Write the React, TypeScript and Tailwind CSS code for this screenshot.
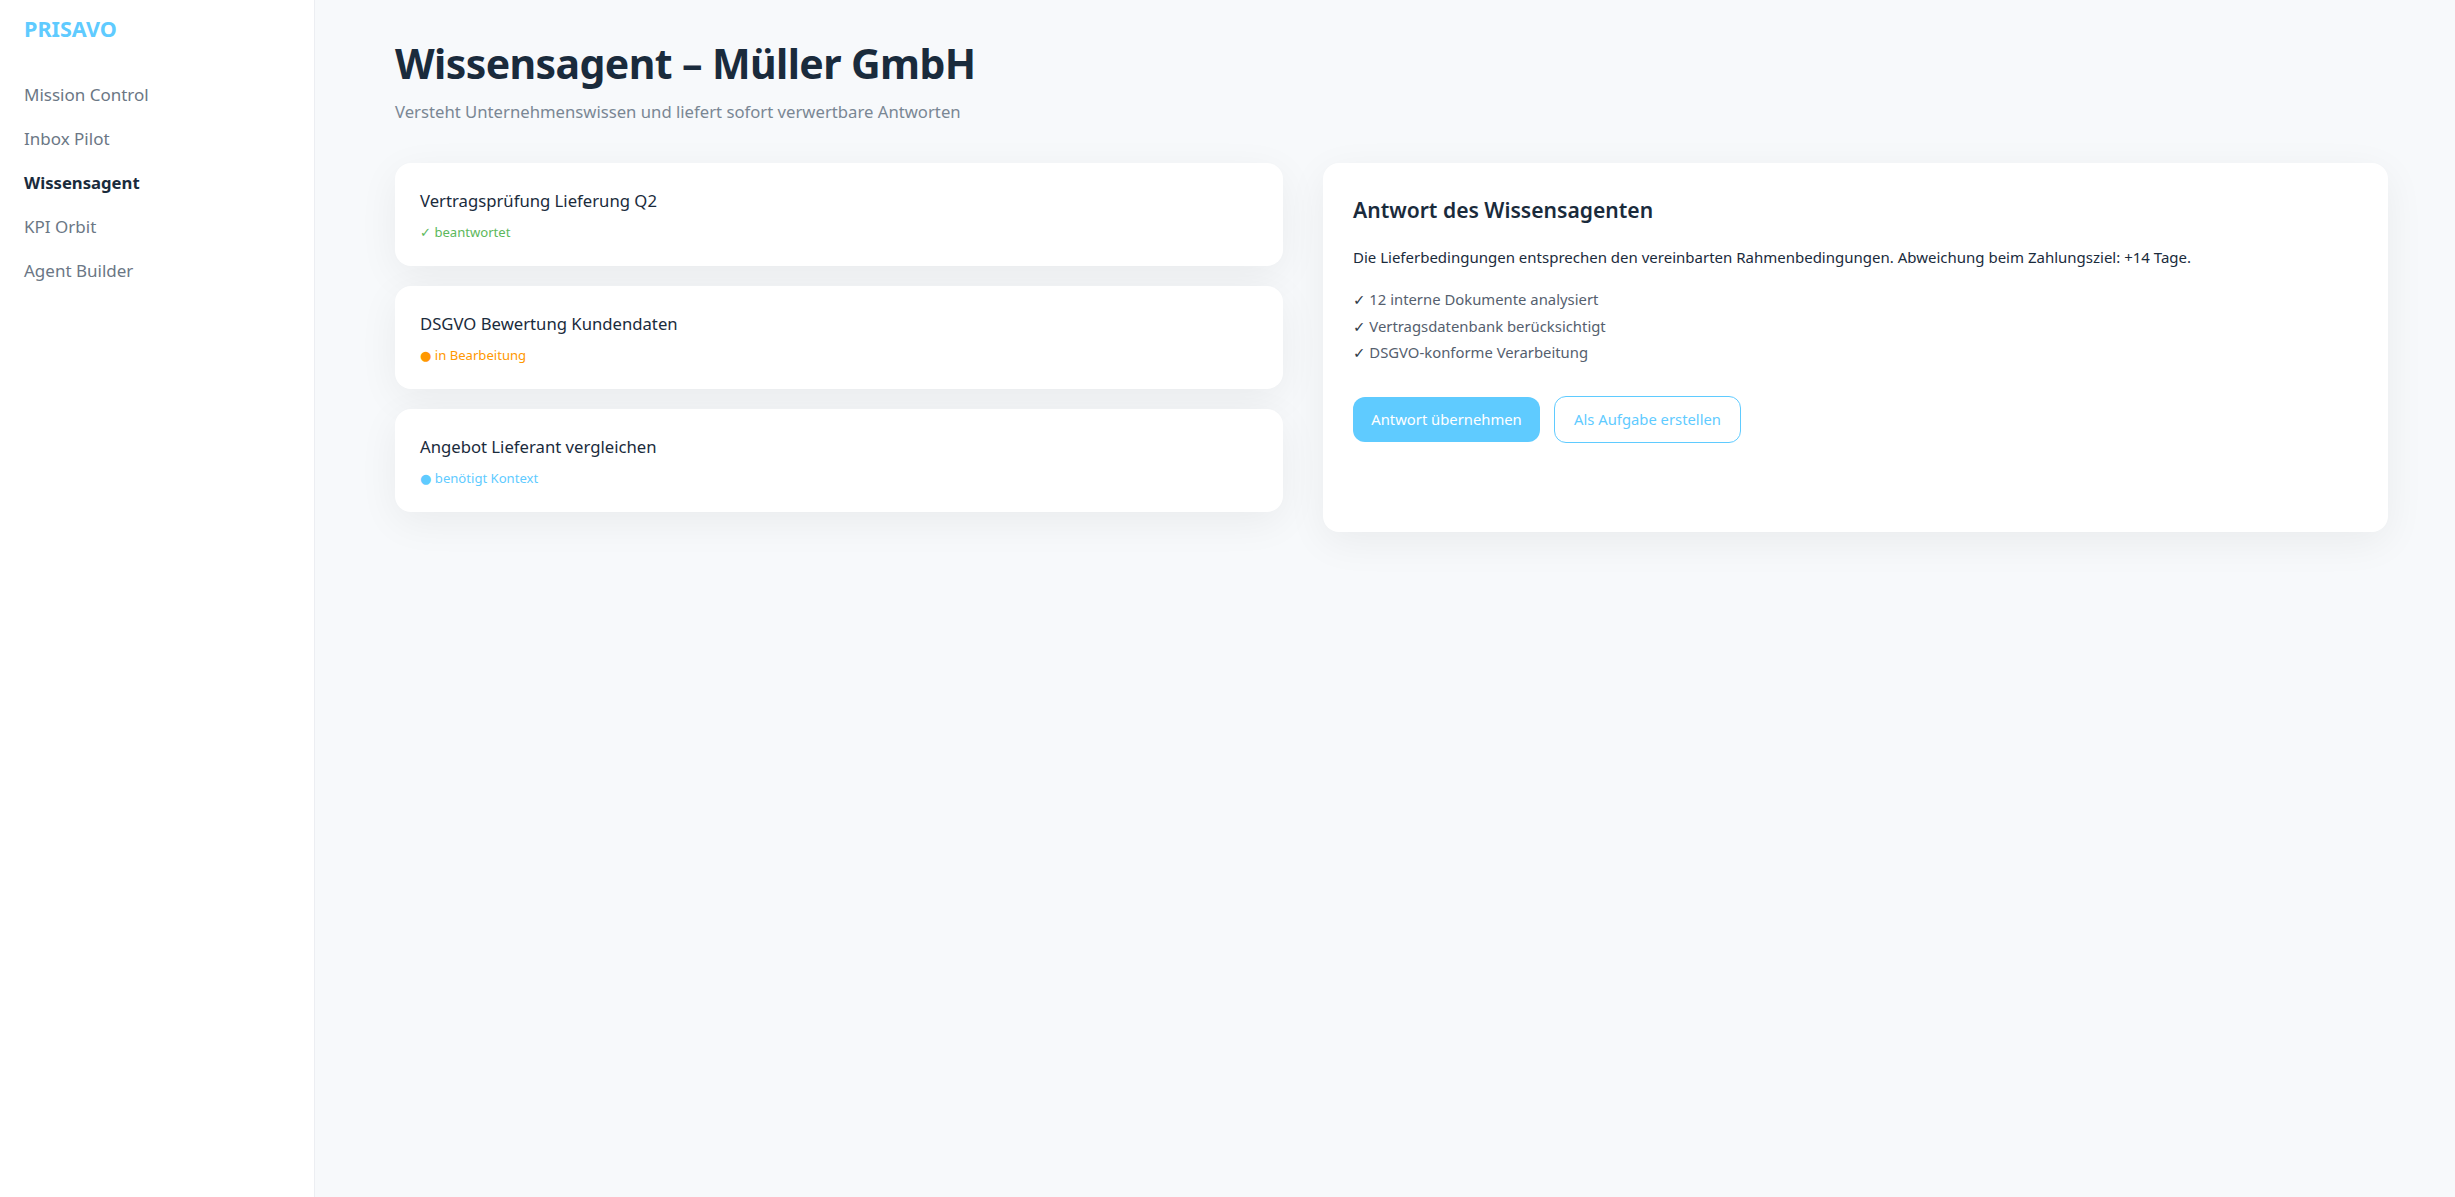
const navItems = [
  { label: "Mission Control", active: false },
  { label: "Inbox Pilot", active: false },
  { label: "Wissensagent", active: true },
  { label: "KPI Orbit", active: false },
  { label: "Agent Builder", active: false },
];

const requests = [
  { title: "Vertragsprüfung Lieferung Q2", mark: "✓", status: "beantwortet", color: "text-[#5cb85c]" },
  { title: "DSGVO Bewertung Kundendaten", mark: "●", status: "in Bearbeitung", color: "text-[#ff9800]" },
  { title: "Angebot Lieferant vergleichen", mark: "●", status: "benötigt Kontext", color: "text-[#5fcbff]" },
];

const checks = [
  "12 interne Dokumente analysiert",
  "Vertragsdatenbank berücksichtigt",
  "DSGVO-konforme Verarbeitung",
];

const App = () => {
  return (
    <div className="flex min-h-[1197px] bg-[#f7f9fb] font-['Noto_Sans','Open_Sans',sans-serif] text-[#1a2b3c]">
      <aside className="w-[315px] shrink-0 border-r border-[#eceef2] bg-white px-6 pt-[15px]">
        <div className="text-[21.6px] leading-[28px] font-bold text-[#5fcbff]">PRISAVO</div>
        <nav className="mt-[30px] flex flex-col">
          {navItems.map((item) => (
            <div
              key={item.label}
              className={
                item.active
                  ? "h-11 text-[16.7px] leading-11 font-bold text-[#1a2b3c]"
                  : "h-11 text-[17px] leading-11 text-[#6b7785]"
              }
            >
              {item.label}
            </div>
          ))}
        </nav>
      </aside>

      <main className="flex-1 pt-[35px] pr-[67px] pl-[80px]">
        <h1 className="text-[41px] leading-[56px] font-bold tracking-[-0.6px]">Wissensagent – Müller GmbH</h1>
        <p className="mt-[8px] text-[16.7px] leading-[26px] text-[#7a8794]">
          Versteht Unternehmenswissen und liefert sofort verwertbare Antworten
        </p>

        <div className="mt-[38px] grid grid-cols-[888px_1fr] gap-10">
          <div className="flex flex-col gap-5">
            {requests.map((request) => (
              <div
                key={request.title}
                className="h-[103px] rounded-2xl bg-white px-[25px] pt-[24px] shadow-[0_10px_40px_rgba(0,0,0,0.06)]"
              >
                <div className="text-[16.7px] leading-[28px]">{request.title}</div>
                <div className={`mt-[7px] text-[13.1px] leading-[20px] ${request.color}`}>
                  <span className="font-['DejaVu_Sans']">{request.mark}</span> {request.status}
                </div>
              </div>
            ))}
          </div>

          <section className="h-[369px] rounded-2xl bg-white px-[30px] pt-[31px] shadow-[0_10px_40px_rgba(0,0,0,0.06)]">
            <h2 className="text-[21.1px] leading-[32px] font-semibold">Antwort des Wissensagenten</h2>
            <p className="mt-[19px] text-[15px] leading-[24px]">
              Die Lieferbedingungen entsprechen den vereinbarten Rahmenbedingungen. Abweichung beim
              Zahlungsziel: +14 Tage.
            </p>
            <ul className="mt-[18px] text-[14.85px] leading-[25.6px] text-[#55606e]">
              {checks.map((check) => (
                <li key={check}>
                  <span className="font-['DejaVu_Sans'] text-[#2f3b48]">✓</span> {check}
                </li>
              ))}
            </ul>
            <div className="mt-[29px] flex items-center gap-[14px]">
              <button className="h-[45px] w-[187px] rounded-xl bg-[#5fcbff] text-[14.8px] text-white">
                Antwort übernehmen
              </button>
              <button className="h-[47px] w-[187px] rounded-xl border border-[#5fcbff] bg-white text-[14.8px] text-[#5fcbff]">
                Als Aufgabe erstellen
              </button>
            </div>
          </section>
        </div>
      </main>
    </div>
  );
};

export default App;
